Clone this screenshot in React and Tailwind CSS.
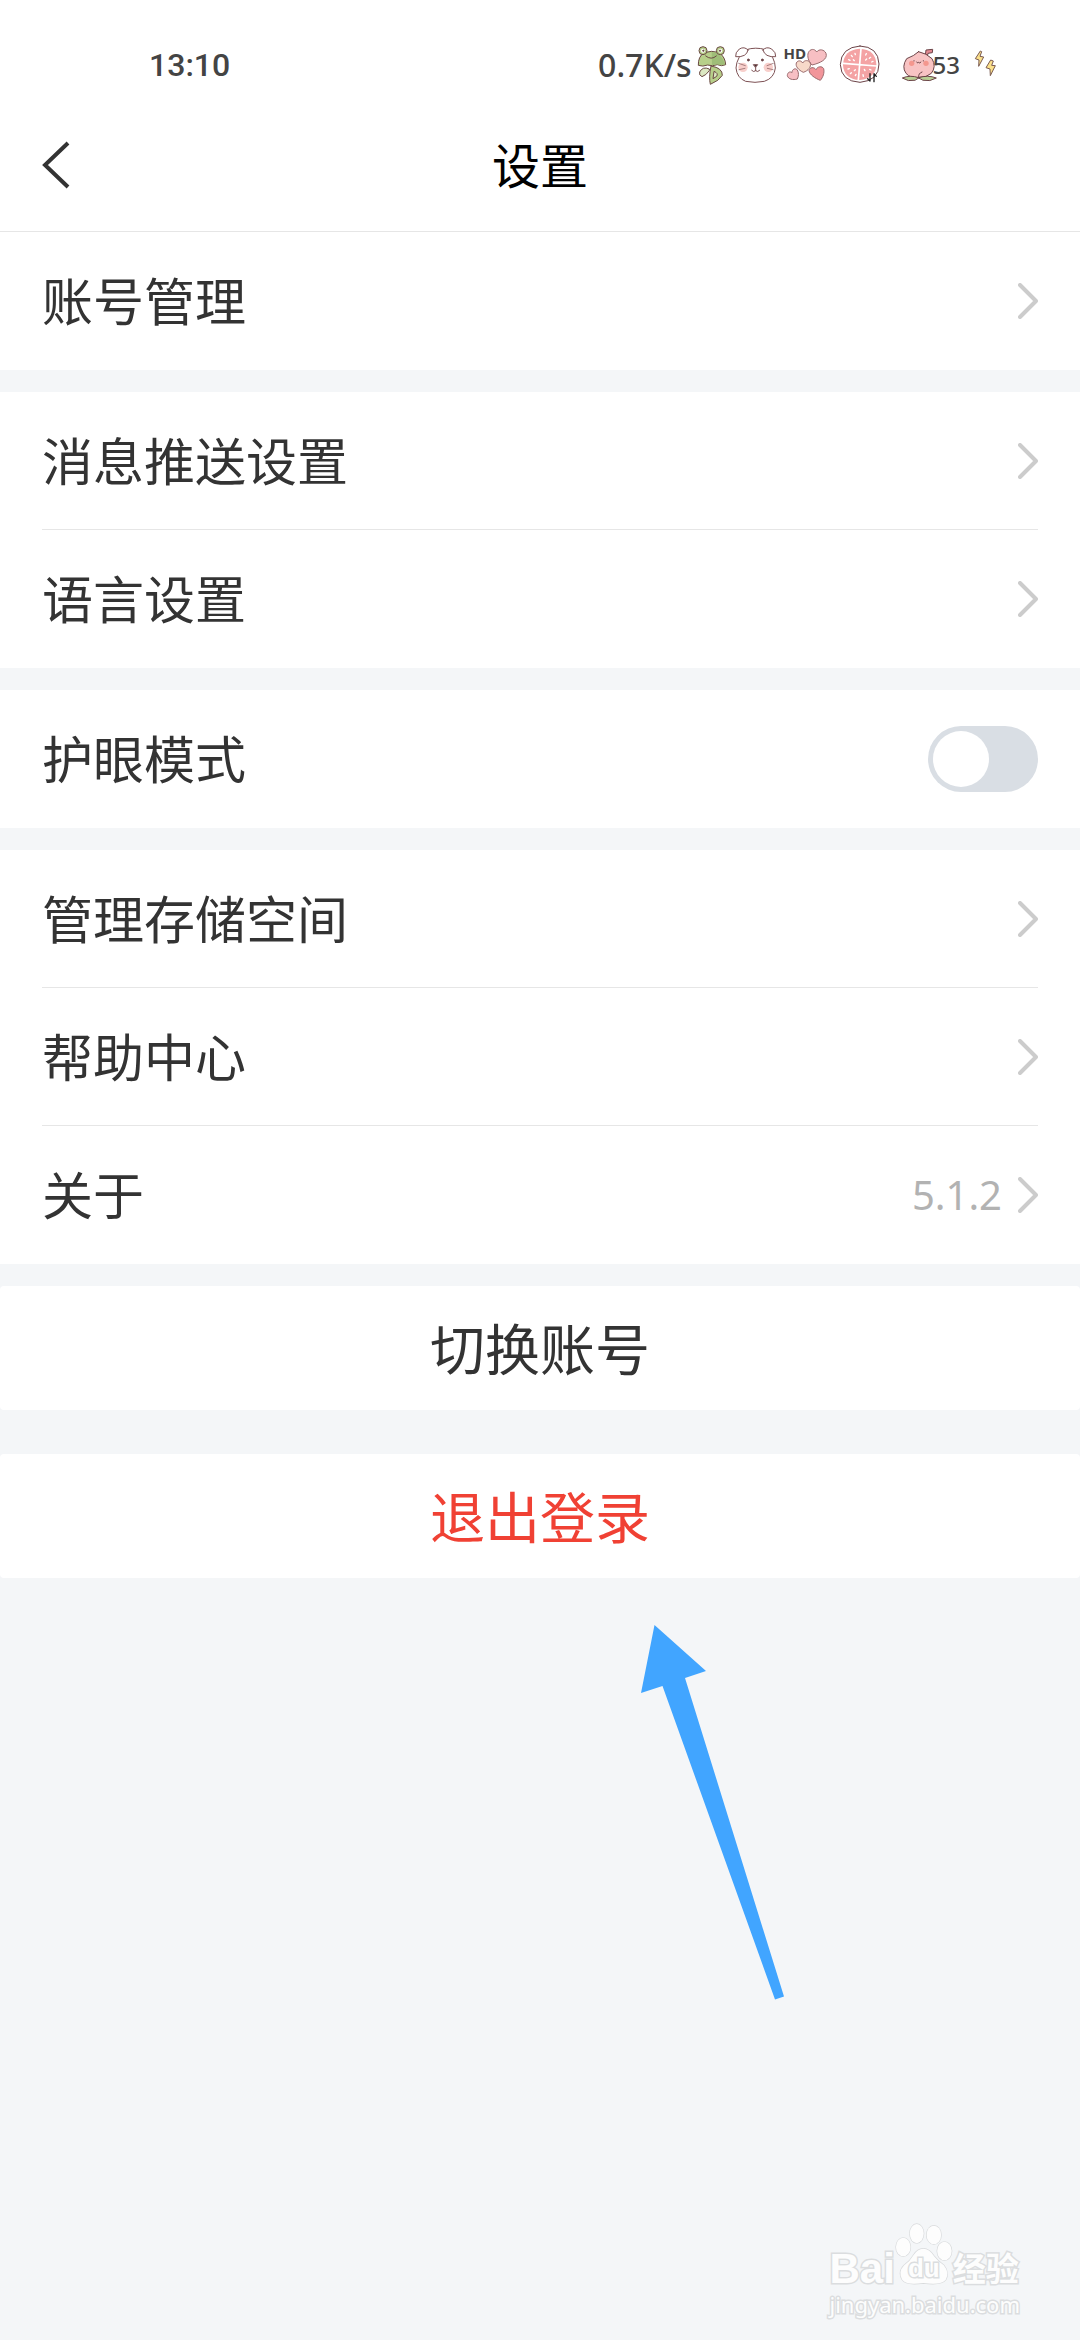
import React, { useState } from 'react';

const FrogIcon = () => (
  <svg viewBox="350 40 93 129" className="w-[31px] h-[43px]" fill="#b7cf8a" stroke="#6b4a44" strokeWidth="3" strokeLinejoin="round">
    <path d="M357 104 Q356 78 374 66 Q397 58 420 66 Q438 80 439 102 Q427 108 414 102 Q399 108 385 103 Q370 109 357 104Z" />
    <path d="M397 64 Q426 64 437 101 Q426 106 414 101 L398 104Z" fill="#9fbd78" stroke="none" />
    <circle cx="371" cy="60" r="12" />
    <circle cx="423" cy="60" r="12" />
    <circle cx="371" cy="60" r="6" fill="#fff" stroke="none" />
    <circle cx="423" cy="60" r="6" fill="#fff" stroke="none" />
    <circle cx="372" cy="60" r="2" fill="#3d2c2a" />
    <circle cx="422" cy="60" r="2" fill="#3d2c2a" />
    <path d="M378 75 Q396 90 412 75" fill="none" />
    <path d="M390 115 Q370 106 361 124 Q358 134 368 138 Q380 134 390 120Z" fill="#dbe8c2" />
    <path d="M395 106 Q430 112 429 134 Q420 150 393 161 Q388 140 395 106Z" />
    <path d="M404 122 Q418 128 412 137 L401 144Z" fill="#dbe8c2" />
  </svg>
);

const PuppyIcon = () => (
  <svg viewBox="465 40 129 129" className="w-[43px] h-[43px]" fill="#fff" stroke="#7d5154" strokeWidth="3" strokeLinejoin="round" strokeLinecap="round">
    <path d="M502 57 Q530 48 560 57 Q588 78 589 112 Q586 142 556 152 Q528 158 500 152 Q474 142 471 112 Q473 78 502 57Z" />
    <path d="M507 58 Q496 46 481 55 Q468 66 470 78 Q484 80 496 74 Q506 68 507 58Z" />
    <path d="M552 58 Q562 46 578 55 Q592 66 590 78 Q576 80 564 74 Q554 68 552 58Z" />
    <circle cx="492" cy="110" r="14" fill="#f8cfcb" stroke="none" />
    <circle cx="568" cy="110" r="14" fill="#f8cfcb" stroke="none" />
    <circle cx="508" cy="88" r="3" fill="#3d2c2a" />
    <circle cx="550" cy="88" r="3" fill="#3d2c2a" />
    <path d="M524 102 L536 102 L530 109Z" fill="#3d2c2a" />
    <path d="M530 109 V120 M518 119 Q524 126 530 120 Q536 126 542 119" fill="none" />
    <path d="M479 98 L499 105 M480 117 L498 113 M583 98 L564 105 M582 117 L565 113" fill="none" strokeWidth="2" />
  </svg>
);

const HeartsIcon = () => (
  <span className="relative block">
    <svg viewBox="15 40 132 129" className="w-[44px] h-[43px]" stroke="#9a6b6e" strokeWidth="3" strokeLinejoin="round">
      <path d="M99 103 C88 92 84 76 88 66 C93 54 107 53 113 64 C120 54 136 56 141 68 C147 86 124 97 99 103Z" fill="#f7bfc3" />
      <path d="M73 125 C58 118 49 107 52 97 C56 88 67 89 71 97 C76 87 90 88 94 97 C97 109 88 120 73 125Z" fill="#f7d9c9" />
      <path d="M55 145 C42 149 28 146 25 135 C25 125 33 121 39 126 C39 115 50 111 55 118 C60 126 59 137 55 145Z" fill="#f7bfc3" />
      <path d="M124 149 C108 143 92 132 90 120 C92 109 105 108 111 117 C115 107 129 105 134 114 C137 126 132 140 124 149Z" fill="#f2959a" />
    </svg>
    <span className="absolute left-0 top-0 font-['Open_Sans'] text-[15px] leading-[18px] font-bold">HD</span>
  </span>
);

const GrapefruitIcon = () => (
  <svg viewBox="180 40 123 129" className="w-[41px] h-[43px]" strokeLinejoin="round" strokeLinecap="round">
    <path d="M243 46 Q298 48 300 100 Q300 150 243 155 Q186 152 184 102 Q186 50 243 46Z" fill="#fff" stroke="#6b4347" strokeWidth="3" />
    <path d="M242 54 Q290 56 292 101 Q290 144 242 148 Q194 145 192 102 Q194 57 242 54Z" fill="#f4a3a4" />
    <path d="M246 54 L238 148 M192 98 L292 106" stroke="#fff" strokeWidth="5" fill="none" />
    <path d="M217 74 L220 78 M228 68 L229 72 M209 87 L213 89 M223 87 L226 90 M262 69 L260 73 M275 80 L271 83 M263 85 L260 88 M282 92 L278 94 M207 115 L211 114 M214 129 L217 126 M226 120 L229 117 M229 135 L231 131 M258 120 L256 116 M253 137 L252 132 M276 118 L272 116" stroke="#fff" strokeWidth="4" />
    <path d="M273 129 V151 L266 144 M285 153 V129 L292 137" stroke="#1f1f1f" strokeWidth="4" fill="none" />
  </svg>
);

const PeachIcon = () => (
  <svg viewBox="365 40 108 129" className="w-[36px] h-[43px]" stroke="#6b4347" strokeWidth="3" strokeLinejoin="round" strokeLinecap="round">
    <path d="M438 74 L440 58 L460 56 L459 66 L446 68 L444 76Z" fill="#e58a92" />
    <path d="M418 63 Q442 68 458 84 Q472 108 456 128 Q440 142 418 140 Q394 144 380 128 Q366 108 382 84 Q404 76 418 63Z" fill="#f8c3c3" />
    <circle cx="397" cy="98" r="8" fill="#f4978e" stroke="none" />
    <circle cx="440" cy="98" r="8" fill="#f4978e" stroke="none" />
    <path d="M404 90 V91 M432 90 V91 M412 94 Q415 100 418 95 Q421 100 425 94 M428 124 Q416 128 418 140" fill="none" />
    <path d="M418 141 Q392 132 369 142 Q386 154 406 149Z" fill="#b9cf94" />
    <path d="M418 141 Q446 132 471 142 Q452 154 432 149Z" fill="#b9cf94" />
  </svg>
);

const BoltsIcon = () => (
  <svg viewBox="582 40 69 129" className="w-[23px] h-[43px]" fill="#fbe08a" stroke="#7a5a50" strokeWidth="3" strokeLinejoin="round">
    <path d="M601 61 L586 84 L597 88 L596 107 L611 79 L600 77 L605 63Z" />
    <path d="M632 88 L618 111 L630 115 L631 135 L646 105 L635 104 L640 91Z" />
  </svg>
);

const Chevron = () => (
  <svg viewBox="0 0 20 36" className="w-5 h-9" fill="none" stroke="#cccccc" strokeWidth="4" strokeLinecap="round" strokeLinejoin="round">
    <path d="M2 2 L18 18 L2 34" />
  </svg>
);

const StatusBar = () => (
  <div className="flex h-[102px] items-center justify-between pt-7 pl-[149px] pr-[83px] text-[#444444]">
    <span className="font-[Roboto] text-[32px] leading-10 font-medium">13:10</span>
    <div className="flex items-center">
      <span className="mr-1 font-['Noto_Sans'] text-[32px] leading-10 font-medium">0.7K/s</span>
      <div className="mr-[11px] flex items-center gap-[7px]">
        <FrogIcon />
        <PuppyIcon />
        <HeartsIcon />
      </div>
      <div className="mr-[14px] flex items-center gap-[21px]">
        <GrapefruitIcon />
        <span className="flex items-center">
          <PeachIcon />
          <span className="-ml-1 font-['Noto_Sans'] text-[24px] leading-8 font-medium">53</span>
        </span>
      </div>
      <BoltsIcon />
    </div>
  </div>
);

const NavBar = () => (
  <div className="grid h-[130px] grid-cols-3 items-center border-b border-[#e6e6e6] px-[42px] pb-1">
    <button aria-label="返回" className="justify-self-start">
      <svg viewBox="0 0 28 48" className="w-7 h-12" fill="none" stroke="#333333" strokeWidth="4">
        <path d="M26 2 L3 24 L26 46" />
      </svg>
    </button>
    <h1 className="pb-1 text-center text-[48px] leading-[72px] text-black">设置</h1>
  </div>
);

const Group = ({ children }) => (
  <section className="mb-[22px] bg-white px-[42px] divide-y divide-[#e6e6e6]">{children}</section>
);

const Row = ({ label, value }) => (
  <button className="flex h-[138px] w-full items-center justify-between text-left">
    <span className="pb-1 text-[51px] leading-[76px]">{label}</span>
    <span className="flex items-center gap-4">
      {value && <span className="font-['Noto_Sans'] text-[40px] leading-[60px] text-[#b2b2b2]">{value}</span>}
      <Chevron />
    </span>
  </button>
);

const SwitchRow = ({ label, checked, onChange }) => (
  <label className="flex h-[138px] items-center justify-between">
    <span className="pb-1 text-[51px] leading-[76px]">{label}</span>
    <input
      type="checkbox"
      role="switch"
      checked={checked}
      onChange={(e) => onChange(e.target.checked)}
      className="flex h-[66px] w-[110px] appearance-none items-center rounded-full bg-[#d9dee4] px-[5px] before:size-14 before:rounded-full before:bg-white checked:justify-end checked:bg-[#41a5ff]"
    />
  </label>
);

// Tapered pointer that calls out the logout button
const PointerArrow = () => (
  <svg viewBox="0 0 144 376" className="absolute left-1/2 top-full mt-[47px] ml-[101px] w-36 h-[376px]" fill="#41a5ff">
    <path d="M13.5 0 L65 46 L44 53 L143 371.5 L134 374.5 L21.5 61 L0 68Z" />
  </svg>
);

const Watermark = () => (
  <div className="absolute right-[60px] bottom-[18px] text-[#fdfdfd] [-webkit-text-stroke:3px_#dbdddf] [paint-order:stroke_fill]">
    <div className="flex items-end">
      <span className="font-['Liberation_Sans'] text-[42px] leading-[34px] font-bold">Bai</span>
      <span className="relative block">
        <svg viewBox="280 70 176 192" className="w-[58px] h-16" fill="#fdfdfd" stroke="#d8dadc" strokeWidth="4">
          <ellipse cx="305" cy="145" rx="22" ry="28" />
          <ellipse cx="346" cy="104" rx="21" ry="29" />
          <ellipse cx="398" cy="108" rx="22" ry="28" />
          <ellipse cx="430" cy="157" rx="22" ry="28" />
          <path d="M366 150 Q384 150 398 172 Q408 186 428 200 Q446 222 434 244 Q420 262 366 254 Q314 262 302 244 Q288 220 308 200 Q326 188 336 170 Q348 150 366 150Z" />
        </svg>
        <span className="absolute inset-x-0 bottom-1 text-center font-['Liberation_Sans'] text-[26px] leading-7 font-bold">du</span>
      </span>
      <span className="text-[33px] leading-[38px] font-bold">经验</span>
    </div>
    <div className="font-['Noto_Sans'] text-[22px] leading-9">jingyan.baidu.com</div>
  </div>
);

const App = () => {
  const [eyeCare, setEyeCare] = useState(false);

  return (
    <div className="relative min-h-screen bg-[#f4f6f8] font-['Noto_Sans_CJK_SC',sans-serif] text-[#333333]">
      <header className="bg-white">
        <StatusBar />
        <NavBar />
      </header>

      <main>
        <Group>
          <Row label="账号管理" />
        </Group>
        <Group>
          <Row label="消息推送设置" />
          <Row label="语言设置" />
        </Group>
        <Group>
          <SwitchRow label="护眼模式" checked={eyeCare} onChange={setEyeCare} />
        </Group>
        <Group>
          <Row label="管理存储空间" />
          <Row label="帮助中心" />
          <Row label="关于" value="5.1.2" />
        </Group>

        {/* Account actions */}
        <div className="relative flex flex-col gap-11">
          <button className="h-[124px] rounded-sm bg-white pb-1 text-[55px] leading-[80px]">切换账号</button>
          <button className="h-[124px] rounded-sm bg-white pb-1 text-[55px] leading-[80px] text-[#f04134]">退出登录</button>
          <PointerArrow />
        </div>
      </main>

      <Watermark />
    </div>
  );
};

export default App;
